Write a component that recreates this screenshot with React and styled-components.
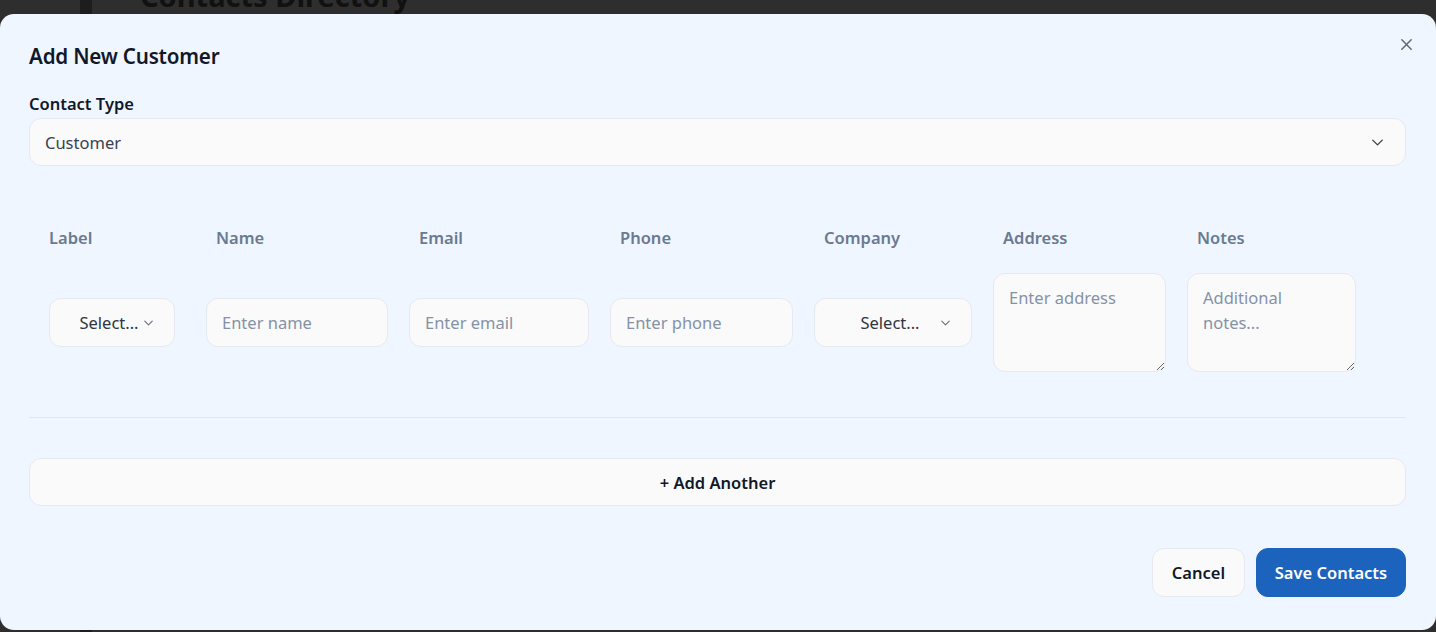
import React from "react";
import styled, { createGlobalStyle } from "styled-components";

const Global = createGlobalStyle`
  html, body { margin: 0; padding: 0; }
  body {
    width: 1436px;
    height: 632px;
    overflow: hidden;
    background: #2e2e2e;
    font-family: "Noto Sans", "Open Sans", sans-serif;
  }
  * { box-sizing: border-box; }
`;

const Backdrop = styled.div`
  display: flex;
  height: 632px;
  background: #2e2e2e;
`;

const SideRail = styled.div`
  width: 92px;
  border-right: 12px solid #1d1d1d;
  flex-shrink: 0;
`;

const BackMain = styled.div`
  padding-left: 48px;
`;

const BackTitle = styled.h1`
  margin: -24px 0 0;
  font-size: 29px;
  font-weight: 700;
  color: #111;
`;

const Modal = styled.div`
  position: fixed;
  top: 14px;
  left: 0;
  width: 1436px;
  height: 616px;
  background: #eff6ff;
  border-radius: 14px;
  padding: 27px 30px 32px 29px;
  display: flex;
  flex-direction: column;
`;

const Title = styled.h2`
  margin: 0;
  font-size: 20.6px;
  line-height: 30px;
  font-weight: 600;
  color: #111827;
  letter-spacing: -0.2px;
`;

const CloseBtn = styled.button`
  position: absolute;
  top: 21px;
  right: 21px;
  width: 18px;
  height: 18px;
  padding: 0;
  border: none;
  background: transparent;
  display: flex;
  align-items: center;
  justify-content: center;
  color: #5f6672;
`;

const FieldLabel = styled.div`
  margin-top: 21px;
  font-size: 16.5px;
  line-height: 24px;
  font-weight: 600;
  color: #111827;
`;

const TypeSelect = styled.div`
  margin-top: 2px;
  height: 48px;
  border: 1px solid #e6e9ee;
  border-radius: 12px;
  background: #fafafa;
  display: flex;
  align-items: center;
  justify-content: space-between;
  padding: 0 18px 0 15px;
  font-size: 16.5px;
  color: #374151;
`;

const Grid = styled.div`
  display: grid;
  grid-template-columns: 136px 182px 180px 183px 158px 173px 169px;
  column-gap: 21px;
  padding-left: 20px;
`;

const HeadRow = styled(Grid)`
  margin-top: 51px;
  height: 40px;
  align-items: center;
`;

const HeadCell = styled.div`
  padding-left: ${(p) => (p.$first ? 0 : 10)}px;
  font-size: 16.5px;
  font-weight: 600;
  color: #6b7a90;
`;

const BodyRow = styled(Grid)`
  margin-top: 16px;
  align-items: center;
  height: 99px;
`;

const controlBase = `
  height: 49px;
  border: 1px solid #e6e9ee;
  border-radius: 12px;
  background: #fafafa;
  font-family: "Noto Sans", "Open Sans", sans-serif;
  font-size: 16.5px;
  outline: none;
`;

const TextInput = styled.input`
  ${controlBase}
  width: 100%;
  padding: 0 15px;
  color: #374151;
  &::placeholder { color: #8592a6; }
`;

const MiniSelect = styled.div`
  ${controlBase}
  position: relative;
  width: ${(p) => p.$w}px;
  display: flex;
  align-items: center;
  justify-content: center;
  padding-right: 6px;
  color: #2f3540;
`;

const ChevronSlot = styled.span`
  position: absolute;
  right: 18px;
  top: 50%;
  transform: translateY(-50%);
  display: flex;
  color: #6b7280;
`;

const TextArea = styled.textarea`
  ${controlBase}
  height: 99px;
  width: ${(p) => p.$w}px;
  padding: 11px 15px;
  line-height: 25px;
  resize: both;
  color: #374151;
  &::placeholder { color: #8592a6; }
`;

const Divider = styled.hr`
  margin: 45px 0 0;
  border: none;
  border-top: 1px solid #e1e7ef;
`;

const AddButton = styled.button`
  margin-top: 40px;
  height: 48px;
  width: 100%;
  border: 1px solid #e6e9ee;
  border-radius: 12px;
  background: #fafafa;
  font-family: "Noto Sans", "Open Sans", sans-serif;
  font-size: 16.5px;
  font-weight: 600;
  color: #111827;
`;

const Footer = styled.div`
  margin-top: 42px;
  display: flex;
  justify-content: flex-end;
  gap: 11px;
`;

const FootButton = styled.button`
  height: 49px;
  width: ${(p) => p.$w}px;
  padding: 0;
  border-radius: 12px;
  border: 1px solid ${(p) => (p.$primary ? "#1b63bd" : "#e6e9ee")};
  background: ${(p) => (p.$primary ? "#1b63bd" : "#fafafa")};
  color: ${(p) => (p.$primary ? "#ffffff" : "#111827")};
  font-family: "Noto Sans", "Open Sans", sans-serif;
  font-size: 16.5px;
  font-weight: 600;
`;

const Chevron = ({ size = 12, w = 2 }) => (
  <svg width={size} height={size} viewBox="0 0 24 24" fill="none" stroke="currentColor" strokeWidth={w} strokeLinecap="round" strokeLinejoin="round">
    <path d="M6 9l6 6 6-6" />
  </svg>
);

const headers = ["Label", "Name", "Email", "Phone", "Company", "Address", "Notes"];

export default function App() {
  return (
    <>
      <Global />
      <Backdrop>
        <SideRail />
        <BackMain>
          <BackTitle>Contacts Directory</BackTitle>
        </BackMain>
      </Backdrop>
      <Modal>
        <CloseBtn aria-label="Close">
          <svg width="15" height="15" viewBox="0 0 24 24" fill="none" stroke="currentColor" strokeWidth="2.3" strokeLinecap="round">
            <path d="M4.5 4.5l15 15M19.5 4.5l-15 15" />
          </svg>
        </CloseBtn>
        <Title>Add New Customer</Title>
        <FieldLabel>Contact Type</FieldLabel>
        <TypeSelect>
          <span>Customer</span>
          <Chevron size={19} w={1.7} />
        </TypeSelect>
        <HeadRow>
          {headers.map((h, i) => (
            <HeadCell key={h} $first={i === 0}>{h}</HeadCell>
          ))}
        </HeadRow>
        <BodyRow>
          <MiniSelect $w={126}>
            <span>Select...</span>
            <ChevronSlot><Chevron size={15} w={1.8} /></ChevronSlot>
          </MiniSelect>
          <TextInput placeholder="Enter name" />
          <TextInput placeholder="Enter email" />
          <TextInput placeholder="Enter phone" />
          <MiniSelect $w={158}>
            <span>Select...</span>
            <ChevronSlot><Chevron size={15} w={1.8} /></ChevronSlot>
          </MiniSelect>
          <TextArea $w={173} placeholder="Enter address" />
          <TextArea $w={169} placeholder="Additional notes..." />
        </BodyRow>
        <Divider />
        <AddButton>+ Add Another</AddButton>
        <Footer>
          <FootButton $w={93}>Cancel</FootButton>
          <FootButton $w={150} $primary>Save Contacts</FootButton>
        </Footer>
      </Modal>
    </>
  );
}
